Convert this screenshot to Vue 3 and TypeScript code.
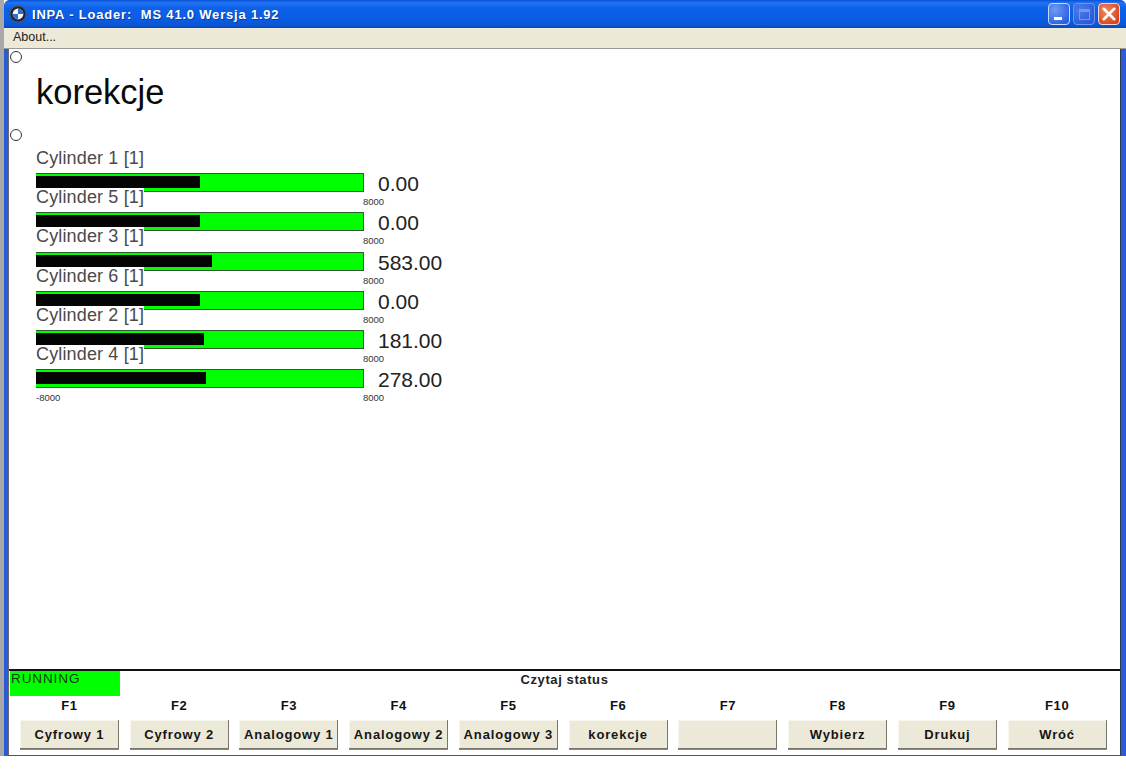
<template>
  <div class="screen">
    <div class="window">
      <div class="titlebar">
        <svg class="logo" viewBox="0 0 18 18" width="18" height="18">
          <circle cx="9" cy="9" r="8.5" fill="#1c2230" />
          <circle cx="9" cy="9" r="5.4" fill="#f4f6fa" />
          <path d="M9 9V3.6A5.4 5.4 0 0 1 14.4 9Z" fill="#2f6fd0" />
          <path d="M9 9V14.4A5.4 5.4 0 0 1 3.6 9Z" fill="#2f6fd0" />
          <circle cx="9" cy="9" r="8" fill="none" stroke="#6d7687" stroke-width="0.7" />
        </svg>
        <span class="title-text">{{ title }}</span>
        <div class="controls">
          <div class="ctl ctl-min"><span class="min-glyph"></span></div>
          <div class="ctl ctl-max"><span class="max-glyph"></span></div>
          <div class="ctl ctl-close">
            <svg viewBox="0 0 12 12" width="14" height="14">
              <path d="M1.5 1.5L10.5 10.5M10.5 1.5L1.5 10.5" stroke="#fff" stroke-width="2.2" stroke-linecap="round" />
            </svg>
          </div>
        </div>
      </div>
      <div class="menubar"><span>About...</span></div>

      <div class="client">
        <div class="content">
          <div class="dot dot-top"></div>
          <h1 class="heading">korekcje</h1>
          <div class="dot dot-second"></div>
          <div class="rows">
            <div v-for="c in cylinders" :key="c.name" class="row">
              <div class="cyl-label">{{ c.name }}</div>
              <div class="bar-line">
                <div class="track">
                  <div class="fill" :style="{ width: fillWidth(c.value) + 'px' }"></div>
                  <span class="scale scale-max">8000</span>
                  <span v-if="c.last" class="scale scale-min">-8000</span>
                </div>
                <div class="value">{{ c.value.toFixed(2) }}</div>
              </div>
            </div>
          </div>
        </div>

        <div class="footer">
          <div class="status-line">
            <div class="running">RUNNING</div>
            <div class="status-text">Czytaj status</div>
          </div>
          <div class="keys">
            <div v-for="k in keys" :key="k.key" class="key">
              <div class="key-name">{{ k.key }}</div>
              <button class="key-btn" type="button">{{ k.label }}</button>
            </div>
          </div>
        </div>
      </div>
    </div>
  </div>
</template>

<script setup lang="ts">
const title = 'INPA - Loader:  MS 41.0 Wersja 1.92'

const cylinders = [
  { name: 'Cylinder 1 [1]', value: 0 },
  { name: 'Cylinder 5 [1]', value: 0 },
  { name: 'Cylinder 3 [1]', value: 583 },
  { name: 'Cylinder 6 [1]', value: 0 },
  { name: 'Cylinder 2 [1]', value: 181 },
  { name: 'Cylinder 4 [1]', value: 278, last: true },
]

const keys = [
  { key: 'F1', label: 'Cyfrowy 1' },
  { key: 'F2', label: 'Cyfrowy 2' },
  { key: 'F3', label: 'Analogowy 1' },
  { key: 'F4', label: 'Analogowy 2' },
  { key: 'F5', label: 'Analogowy 3' },
  { key: 'F6', label: 'korekcje' },
  { key: 'F7', label: '' },
  { key: 'F8', label: 'Wybierz' },
  { key: 'F9', label: 'Drukuj' },
  { key: 'F10', label: 'Wróć' },
]

// track is 328px wide for the range -8000..8000
const fillWidth = (v: number) => ((v + 8000) / 16000) * 328
</script>

<style scoped>
.screen { width: 1126px; height: 776px; background: #fff; overflow: hidden; font-family: "Liberation Sans", Arial, sans-serif; }
.screen::before { content: ""; position: absolute; left: 0; top: 0; width: 4px; height: 756px; background: #a8a8a8; }

.window { margin-left: 4px; width: 1122px; height: 756px; display: flex; flex-direction: column; background: #2a5cd6; border-radius: 6px 6px 0 0; }

.titlebar { height: 28px; flex: none; display: flex; align-items: center; padding: 0 3px 0 5px; background: linear-gradient(to bottom, #0a50d8 0%, #1f74f2 10%, #0d62ea 28%, #0a5ce4 70%, #0a55d2 90%, #0848b8 100%); border-radius: 6px 6px 0 0; }
.logo { flex: none; }
.title-text { margin-left: 5px; color: #fff; font-weight: 700; font-size: 13px; letter-spacing: 0.8px; white-space: pre; text-shadow: 1px 1px 0 #0a3a9c; }
.controls { margin-left: auto; display: flex; gap: 3px; margin-right: 3px; }
.ctl { width: 22px; height: 22px; border: 1px solid #fff; border-radius: 4px; box-sizing: border-box; display: flex; align-items: center; justify-content: center; position: relative; }
.ctl-min { background: radial-gradient(circle at 30% 30%, #6f9cf4, #2a5fe0 80%); border-color: #c8d8fa; }
.min-glyph { position: absolute; left: 5px; bottom: 4px; width: 8px; height: 3px; background: #fff; }
.ctl-max { background: radial-gradient(circle at 30% 30%, #4c7ce6, #2a5adc 80%); border-color: #6f97ee; }
.max-glyph { width: 11px; height: 11px; border: 1px solid #6f97ee; border-top-width: 3px; box-sizing: border-box; }
.ctl-close { background: radial-gradient(circle at 35% 35%, #ee8a64, #d9421c 80%); border-color: #f4d8cc; }

.menubar { height: 21px; flex: none; background: #ece9d8; font-size: 12.5px; color: #222; display: flex; align-items: center; padding: 0 0 3px 9px; box-sizing: border-box; border-bottom: 1px solid #9a9a94; }

.client { flex: 1; min-height: 0; margin: 0 5px 0 4px; background: #fff; border-left: 1px solid #6a6a6a; border-right: 1px solid #303a50; border-bottom: 1px solid #555; display: flex; flex-direction: column; }

.content { flex: 1; min-height: 0; position: relative; }
.dot { width: 12px; height: 12px; box-sizing: border-box; margin-left: 1px; border: 1px solid #333; border-radius: 50%; }
.dot-top { margin-top: 2px; }
.heading { margin: 3px 0 0 27px; height: 53px; font-size: 34.5px; line-height: 52px; font-weight: 400; color: #0a0a0a; }
.dot-second { margin-top: 10px; }
.rows { margin: 12px 0 0 27px; }
.row { display: flow-root; }
.cyl-label { position: relative; z-index: 1; width: 108px; height: 24.2px; margin-top: -4px; font-size: 18px; line-height: 18px; letter-spacing: 0.15px; color: #4a4a4a; background: #fff; white-space: nowrap; }
.bar-line { display: flex; height: 19px; }
.track { position: relative; flex: none; width: 328px; height: 19px; box-sizing: border-box; border: 1px solid #2e5a2e; border-left: 0; background: #00ff00; }
.fill { height: 12px; margin-top: 2px; background: #040404; }
.scale { position: absolute; top: 22px; font-size: 9.5px; line-height: 11px; color: #333; }
.scale-max { left: 100%; }
.scale-min { left: 0; }
.value { margin-left: 14px; font-size: 21px; line-height: 21px; color: #222; }

.footer { flex: none; height: 86px; box-sizing: border-box; border-top: 2px solid #111; }
.status-line { display: flex; height: 25px; }
.running { width: 110px; margin-left: 1px; background: #00ff00; font-size: 13.5px; line-height: 16px; letter-spacing: 0.9px; color: #0f3d0f; padding-left: 1px; box-sizing: border-box; }
.status-text { flex: 1; margin-left: -111px; text-align: center; font-weight: 700; font-size: 13px; line-height: 18px; letter-spacing: 0.6px; color: #222; }

.keys { display: grid; grid-template-columns: repeat(10, 1fr); margin: 0 8px 0 5.5px; padding-top: 1px; }
.key { display: flex; flex-direction: column; align-items: center; }
.key-name { height: 23px; font-weight: 700; font-size: 13px; line-height: 17px; letter-spacing: 0.6px; color: #111; }
.key-btn { width: 99px; height: 29px; padding: 0; border: 0; background: #ece9d8; font-family: inherit; font-weight: 700; font-size: 13px; letter-spacing: 0.85px; color: #151515; box-shadow: inset -1px -1px 0 #77776c, inset 1px 1px 0 #f8f7ef, 0 1px 0 #888; }
</style>
